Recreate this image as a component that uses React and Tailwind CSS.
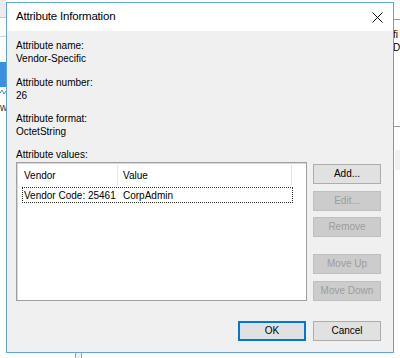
import React from "react";

function Btn({ children, disabled, primary }) {
  const base =
    "h-[20px] w-[68px] flex items-center justify-center text-[10px] leading-none";
  if (disabled)
    return (
      <div className={base + " bg-[#cccccc] border border-[#bfbfbf] text-[#9d9d9d]"}>
        {children}
      </div>
    );
  if (primary)
    return (
      <div
        className={
          base +
          " bg-[#e1e1e1] border border-[#0078d7] shadow-[inset_0_0_0_1px_#0078d7] text-black"
        }
      >
        {children}
      </div>
    );
  return (
    <div className={base + " bg-[#e1e1e1] border border-[#adadad] text-black"}>
      {children}
    </div>
  );
}

function Line({ children }) {
  return <div className="h-[13px] leading-[13px] text-[10px] text-black">{children}</div>;
}

export default function App() {
  return (
    <div
      className="relative w-[400px] h-[358px] bg-white overflow-hidden"
      style={{ fontFamily: '"Liberation Sans", Arial, sans-serif' }}
    >
      {/* background app fragments (left) */}
      <div className="absolute left-0 top-0 w-[6px] h-[17px] bg-[#ececec]" />
      <div className="absolute left-0 top-[17px] w-[6px] h-px bg-[#c8c8c8]" />
      <div className="absolute left-0 top-[36px] w-[6px] h-px bg-[#d0d0d0]" />
      <div className="absolute left-0 top-[62px] w-[6px] h-[25px] bg-[#3c8fe0]" />
      <svg className="absolute left-0 top-[88px]" width="6" height="8" viewBox="0 0 6 8">
        <path d="M0 5 L2 2 L4 6 L6 3" stroke="#3c8fe0" strokeWidth="1" fill="none" />
      </svg>
      <div className="absolute left-0 top-[103px] text-[10px] leading-[10px] text-[#333]">w</div>
      {/* background app fragments (right) */}
      <div className="absolute left-[393px] top-[19px] w-[7px] h-px bg-[#9a9a9a]" />
      <div className="absolute left-[393px] top-[28px] text-[10px] leading-[13px] text-black">fi</div>
      <div className="absolute left-[393px] top-[41px] text-[10px] leading-[13px] text-black">D</div>
      <div className="absolute left-[393px] top-[126px] w-[7px] h-px bg-[#9a9a9a]" />
      <div className="absolute left-[395px] top-[150px] w-[5px] h-[20px] bg-[#f0f0f0]" />
      {/* bottom fragment */}
      <div className="absolute left-[75px] top-[353px] w-[7px] h-[5px] border-x border-[#a0a0a0] bg-[#f0f0f0]" />

      {/* dialog window */}
      <div className="absolute left-[6px] top-[2px] w-[388px] h-[351px] border border-[#5ea3e3] bg-[#f0f0f0] flex flex-col">
        {/* title bar */}
        <div className="h-[28px] bg-white flex items-center justify-between pl-[9px] pr-[9px] shrink-0">
          <span className="text-[11.5px] text-black tracking-[-0.2px]">Attribute Information</span>
          <svg width="11" height="11" viewBox="0 0 11 11" className="mr-[1px]">
            <path d="M0.5 0.5 L10.5 10.5 M10.5 0.5 L0.5 10.5" stroke="#111" strokeWidth="1" />
          </svg>
        </div>
        {/* body */}
        <div className="flex-1 flex flex-col pl-[9px] pr-[12px] pt-[8px]">
          <Line>Attribute name:</Line>
          <Line>Vendor-Specific</Line>
          <div className="h-[11px]" />
          <Line>Attribute number:</Line>
          <Line>26</Line>
          <div className="h-[10px]" />
          <Line>Attribute format:</Line>
          <Line>OctetString</Line>
          <div className="h-[10px]" />
          <Line>Attribute values:</Line>
          <div className="h-[1px]" />
          <div className="flex items-start justify-between">
            {/* list view */}
            <div className="w-[291px] h-[139px] bg-white border border-[#a0a0a0] shadow-[inset_1px_1px_0_#d8d8d8] flex flex-col">
              <div className="flex h-[24px] items-center text-[10px] text-black relative">
                <div className="w-[101px] pl-[7px] h-[20px] flex items-center border-r border-[#e5e5e5]">
                  Vendor
                </div>
                <div className="w-[174px] pl-[5px] h-[20px] flex items-center border-r border-[#e5e5e5]">
                  Value
                </div>
              </div>
              <div className="ml-[5px] w-[271px] h-[16px] border border-dotted border-[#333] flex items-center text-[10px] text-black">
                <div className="w-[100px] pl-[1px]">Vendor Code: 25461</div>
                <div>CorpAdmin</div>
              </div>
            </div>
            {/* buttons */}
            <div className="flex flex-col mt-[2px]">
              <Btn>Add...</Btn>
              <div className="h-[7px]" />
              <Btn disabled>Edit...</Btn>
              <div className="h-[6px]" />
              <Btn disabled>Remove</Btn>
              <div className="h-[17px]" />
              <Btn disabled>Move Up</Btn>
              <div className="h-[7px]" />
              <Btn disabled>Move Down</Btn>
            </div>
          </div>
          <div className="flex justify-end gap-[7px] mt-[20px]">
            <Btn primary>OK</Btn>
            <Btn>Cancel</Btn>
          </div>
        </div>
      </div>
    </div>
  );
}
